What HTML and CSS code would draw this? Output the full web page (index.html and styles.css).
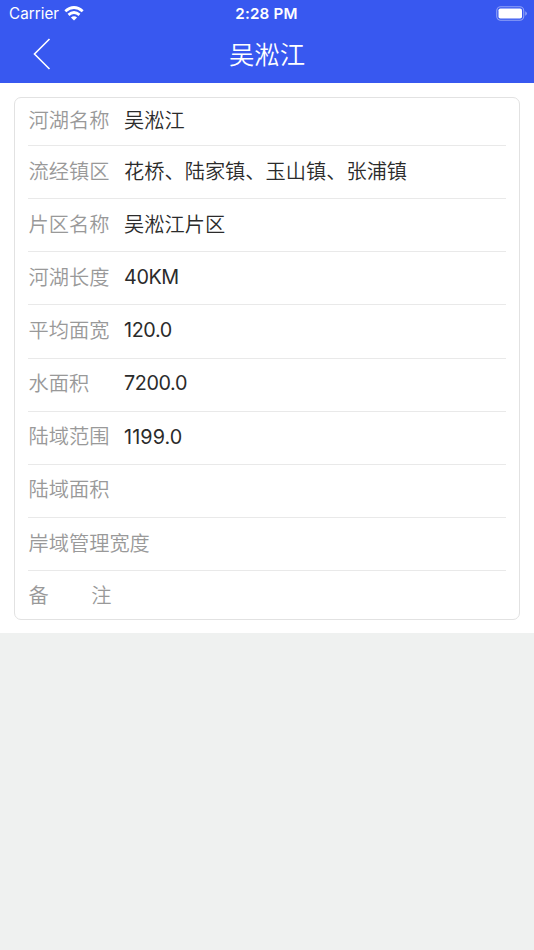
FILE: index.html
```html
<!DOCTYPE html>
<html lang="zh-CN">
<head>
<meta charset="utf-8">
<title>吴淞江</title>
<link rel="stylesheet" href="styles.css">
</head>
<body>
<header class="header">
  <div class="status">
    <div class="carrier"><span>Carrier</span>
      <svg class="wifi" width="20" height="15" viewBox="0 0 20 15" fill="none" stroke="#fff" stroke-width="2.8"><path d="M1.3 5.3Q10-2.3 18.7 5.3M4.5 8.9Q10 4.1 15.5 8.9"/><path d="M6.9 11.5Q10 9 13.1 11.5L10 14.6Z" fill="#fff" stroke="none"/></svg>
    </div>
    <div class="time">2:28 PM</div>
    <svg class="battery" width="31" height="15" viewBox="0 0 31 15"><rect x=".75" y=".75" width="27" height="13.5" rx="4" fill="none" stroke="#fff" stroke-opacity=".45" stroke-width="1.1"/><rect x="2.5" y="2.5" width="23.5" height="10" rx="1.8" fill="#fff"/><path d="M29.3 5.2q1.5 .7 1.5 2.3t-1.5 2.3z" fill="#fff" fill-opacity=".5"/></svg>
  </div>
  <div class="nav">
    <svg class="back" width="18" height="32" viewBox="0 0 18 32" fill="none" stroke="#fff" stroke-width="1.6"><path d="M16.5 1L1.5 16L16.5 31"/></svg>
    <h1>吴淞江</h1>
  </div>
</header>
<main class="content">
  <dl class="card">
    <div class="row"><dt>河湖名称</dt><dd>吴淞江</dd></div>
    <div class="row"><dt>流经镇区</dt><dd>花桥、陆家镇、玉山镇、张浦镇</dd></div>
    <div class="row"><dt>片区名称</dt><dd>吴淞江片区</dd></div>
    <div class="row"><dt>河湖长度</dt><dd class="latin">40KM</dd></div>
    <div class="row"><dt>平均面宽</dt><dd class="latin">120.0</dd></div>
    <div class="row"><dt>水面积</dt><dd class="latin">7200.0</dd></div>
    <div class="row"><dt>陆域范围</dt><dd class="latin loose">1199.0</dd></div>
    <div class="row"><dt>陆域面积</dt><dd></dd></div>
    <div class="row"><dt>岸域管理宽度</dt><dd></dd></div>
    <div class="row"><dt class="spread"><span>备</span><span>注</span></dt><dd></dd></div>
  </dl>
</main>
</body>
</html>
```
FILE: styles.css
```css
* { box-sizing: border-box; }
body { margin: 0; min-height: 950px; background: #eff1f0; font-family: Inter, "Noto Sans CJK SC", sans-serif; }
.header { height: 83px; background: #3858f0; color: #fff; }
.status { height: 27px; display: grid; grid-template-columns: 1fr auto 1fr; align-items: center; padding: 0 7px 0 9px; font-size: 15.2px; }
.carrier { display: flex; align-items: center; gap: 5px; letter-spacing: .05px; }
.time { padding-right: 3px; font-weight: 600; letter-spacing: .2px; }
.battery { justify-self: end; }
.nav { height: 53px; display: grid; grid-template-columns: 80px 1fr 80px; align-items: center; }
.back { margin-left: 33px; }
h1 { margin: 0 0 2px; text-align: center; font-size: 25.4px; line-height: 36px; font-weight: 350; font-family: "Noto Sans CJK SC", sans-serif; }
.content { height: 550px; background: #fff; padding: 14px; }
.card { margin: 0; height: 523px; border: 1px solid #e2e2e2; border-radius: 7px; padding: 0 13px; }
.row { height: 53.15px; display: flex; align-items: center; padding-bottom: 1px; border-bottom: 1px solid #e9e9e9; font-size: 20.23px; line-height: 30px; white-space: nowrap; }
.row:first-child { height: 48px; padding-bottom: 1px; }
.row:last-child { height: 49px; padding-bottom: 0; border: 0; }
dt { min-width: 81px; margin: 0 14.5px 0 .5px; color: #999; font-weight: 350; }
dd { margin: 0; color: #2b2b2b; font-weight: 350; }
.latin { padding-bottom: 1.5px; font-size: 19.8px; font-weight: 400; letter-spacing: -.4px; }
.loose { letter-spacing: .1px; }
.spread { min-width: 83px; display: flex; justify-content: space-between; }
```
